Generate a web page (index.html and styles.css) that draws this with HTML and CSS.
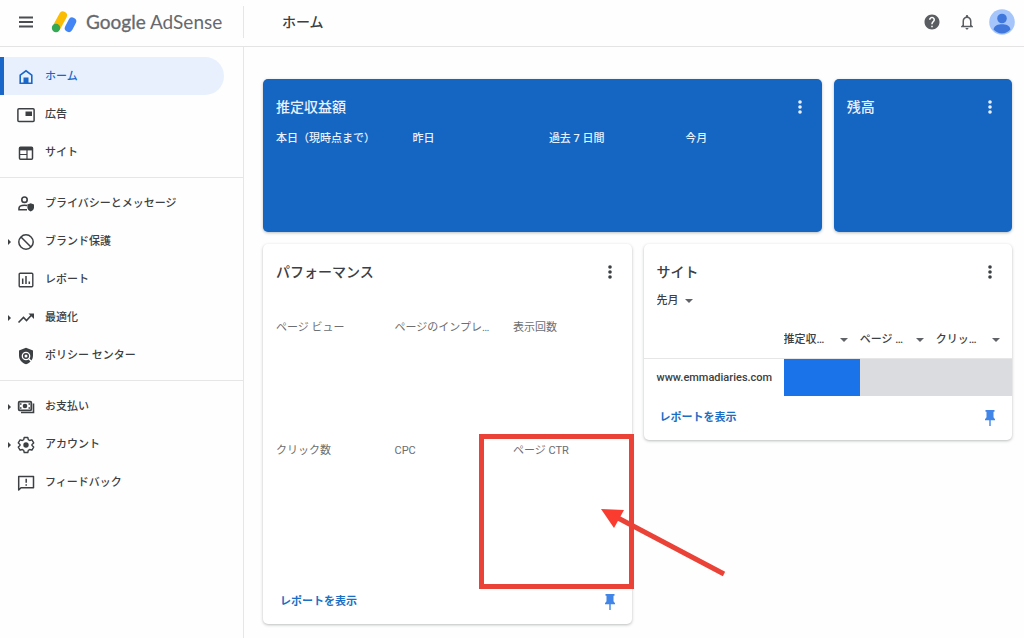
FILE: index.html
```html
<!DOCTYPE html>
<html lang="ja">
<head>
<meta charset="utf-8">
<meta name="viewport" content="width=device-width, initial-scale=1">
<title>ホーム - Google AdSense</title>
<link rel="stylesheet" href="styles.css">
</head>
<body>
<header class="topbar">
  <div class="brand">
    <button class="icon-button" aria-label="メニュー">
      <svg width="16" height="16" viewBox="0 0 16 16"><path d="M1 3.500h14M1 8h14M1 12.500h14" stroke="#4a4d51" stroke-width="1.800"/></svg>
    </button>
    <a class="logo" href="#">
      <svg width="28" height="26" viewBox="0 0 28 26">
        <path d="M7 17.500 13 6.500" stroke="#fbbc04" stroke-width="8" stroke-linecap="round"/>
        <circle cx="6" cy="19" r="4.200" fill="#34a853"/>
        <path d="M18.800 19 22.200 12.500" stroke="#4285f4" stroke-width="8" stroke-linecap="round"/>
      </svg>
      <span class="logo-text"><span class="logo-google">Google</span> AdSense</span>
    </a>
  </div>
  <h1 class="page-title">ホーム</h1>
  <div class="top-actions">
    <button class="icon-button" aria-label="ヘルプ">
      <svg width="18" height="18" viewBox="0 0 24 24" fill="#5a5d61"><path d="M12 2C6.480 2 2 6.480 2 12s4.480 10 10 10 10-4.480 10-10S17.520 2 12 2zm1 17h-2v-2h2v2zm2.070-7.750-.9.920C13.450 12.900 13 13.500 13 15h-2v-.5c0-1.100.450-2.100 1.170-2.830l1.240-1.260c.370-.360.590-.860.590-1.410 0-1.100-.9-2-2-2s-2 .9-2 2H8c0-2.210 1.790-4 4-4s4 1.790 4 4c0 .880-.360 1.680-.930 2.250z"/></svg>
    </button>
    <button class="icon-button" aria-label="通知">
      <svg width="18" height="18" viewBox="0 0 24 24" fill="#5a5d61"><path d="M12 22c1.100 0 2-.9 2-2h-4c0 1.100.9 2 2 2zm6-6v-5c0-3.070-1.630-5.640-4.500-6.320V4c0-.830-.670-1.500-1.500-1.500s-1.500.670-1.500 1.500v.680C7.640 5.360 6 7.920 6 11v5l-2 2v1h16v-1l-2-2zm-2 1H8v-6c0-2.480 1.510-4.500 4-4.500s4 2.020 4 4.500v6z"/></svg>
    </button>
    <button class="icon-button" aria-label="アカウント メニュー">
      <svg width="26" height="26" viewBox="0 0 26 26"><circle cx="13" cy="13" r="12.800" fill="#a6c6fb"/><circle cx="13" cy="9.500" r="4.800" fill="#3f77dd"/><path d="M4.500 20.500c1-4.200 4.500-5.200 8.500-5.200s7.500 1 8.500 5.200c-2 2.400-5 3.900-8.500 3.900s-6.500-1.500-8.500-3.900z" fill="#3f77dd"/></svg>
    </button>
  </div>
</header>

<div class="layout">
  <nav class="sidebar" aria-label="メイン">
    <ul class="nav-group">
      <li><a class="nav-item is-active" href="#" aria-current="page"><span class="caret"></span>
        <svg class="nav-icon" viewBox="0 0 18 18"><path d="M3.200 15.200V7.200L9 2.800l5.800 4.400v8z" fill="none" stroke="currentColor" stroke-width="1.600"/><path d="M6.500 9.500h5V15h-5z" fill="currentColor"/></svg>
        ホーム</a></li>
      <li><a class="nav-item" href="#"><span class="caret"></span>
        <svg class="nav-icon" viewBox="0 0 18 18"><rect x=".9" y="2.700" width="16.200" height="12.800" rx="1" fill="none" stroke="currentColor" stroke-width="1.500"/><path d="M8.500 5.500H15V10H8.500z" fill="currentColor"/></svg>
        広告</a></li>
      <li><a class="nav-item" href="#"><span class="caret"></span>
        <svg class="nav-icon" viewBox="0 0 18 18"><rect x="2.500" y="3.200" width="13" height="12" rx="1" fill="none" stroke="currentColor" stroke-width="1.500"/><path d="M2.500 3.200h13v3.200h-13z" fill="currentColor"/><path d="M2.500 10.500H10M10 6v9" stroke="currentColor" stroke-width="1.200"/></svg>
        サイト</a></li>
    </ul>
    <ul class="nav-group">
      <li><a class="nav-item" href="#"><span class="caret"></span>
        <svg class="nav-icon" viewBox="0 0 18 18"><circle cx="7.500" cy="4.700" r="2.700" fill="none" stroke="currentColor" stroke-width="1.600"/><path d="M10 14.700H2v-1.500c0-2 2.500-3 5.500-3 1 0 2 .1 2.700.4" fill="none" stroke="currentColor" stroke-width="1.600"/><path d="M13.700 8.200 17 9.500v2.800c0 2-1.400 3.600-3.300 4.200-1.900-.6-3.300-2.200-3.300-4.200V9.500z" fill="currentColor"/></svg>
        プライバシーとメッセージ</a></li>
      <li><a class="nav-item" href="#"><span class="caret has-children"></span>
        <svg class="nav-icon" viewBox="0 0 18 18"><circle cx="9" cy="9" r="7.200" fill="none" stroke="currentColor" stroke-width="1.500"/><path d="m4 4 10 10" stroke="currentColor" stroke-width="1.500"/></svg>
        ブランド保護</a></li>
      <li><a class="nav-item" href="#"><span class="caret"></span>
        <svg class="nav-icon" viewBox="0 0 18 18"><rect x="2.200" y="2.200" width="13.600" height="13.600" rx="1" fill="none" stroke="currentColor" stroke-width="1.400"/><path d="M5.700 7.500V13M9 5v8M12.300 10.500V13" stroke="currentColor" stroke-width="1.500"/></svg>
        レポート</a></li>
      <li><a class="nav-item" href="#"><span class="caret has-children"></span>
        <svg class="nav-icon" viewBox="0 0 18 18"><path d="m1.500 13.500 5-5 3 3 5.500-6" fill="none" stroke="currentColor" stroke-width="1.600"/><path d="M11.500 4.500H17V10z" fill="currentColor"/></svg>
        最適化</a></li>
      <li><a class="nav-item" href="#"><span class="caret"></span>
        <svg class="nav-icon" viewBox="0 0 18 18"><path d="M9 .8 16 3.500v5c0 4-2.900 7.500-7 8.700-4.100-1.200-7-4.700-7-8.700v-5z" fill="currentColor"/><circle cx="9" cy="9" r="3.700" fill="none" stroke="#fff" stroke-width="1.300"/><circle cx="9" cy="9" r="1.500" fill="#fff"/><path d="m11.500 11.500 3 3" stroke="#fff" stroke-width="1.300"/></svg>
        ポリシー センター</a></li>
    </ul>
    <ul class="nav-group">
      <li><a class="nav-item" href="#"><span class="caret has-children"></span>
        <svg class="nav-icon" viewBox="0 0 18 18"><rect x="1.700" y="3.700" width="12.600" height="8.600" rx="1" fill="none" stroke="currentColor" stroke-width="1.800"/><circle cx="8" cy="8" r="2.300" fill="currentColor"/><path d="M3 6h1.500M11.500 6H13M3 10h1.500M11.500 10H13" stroke="currentColor" stroke-width="1.400"/><path d="M16.500 5.500v9H4" fill="none" stroke="currentColor" stroke-width="1.600"/></svg>
        お支払い</a></li>
      <li><a class="nav-item" href="#"><span class="caret has-children"></span>
        <svg class="nav-icon" viewBox="0 0 18 18"><path d="M7.200 1.500h3.600l.5 2.200 1.400.8 2.200-.7 1.800 3.100-1.700 1.500v1.200l1.700 1.500-1.800 3.100-2.200-.7-1.400.8-.5 2.200H7.200l-.5-2.200-1.400-.8-2.200.7-1.800-3.100L3 9.600V8.400L1.300 6.900l1.800-3.100 2.200.7 1.400-.8z" fill="none" stroke="currentColor" stroke-width="1.400" stroke-linejoin="round"/><circle cx="9" cy="9" r="2.700" fill="currentColor"/></svg>
        アカウント</a></li>
      <li><a class="nav-item" href="#"><span class="caret"></span>
        <svg class="nav-icon" viewBox="0 0 18 18"><path d="M1.700 16V2.500h14.800v11.200H4z" fill="none" stroke="currentColor" stroke-width="1.500" stroke-linejoin="round"/><path d="M9.200 4.800v4M9.200 10.200v1.600" stroke="currentColor" stroke-width="1.500"/></svg>
        フィードバック</a></li>
    </ul>
  </nav>

  <main class="dashboard">
    <section class="card card-blue earnings">
      <div class="card-head"><h2 class="card-title">推定収益額</h2>
        <button class="more" aria-label="推定収益額のその他の操作"><svg width="6" height="16" viewBox="0 0 6 16" fill="currentColor"><circle cx="3" cy="3" r="1.800"/><circle cx="3" cy="8" r="1.800"/><circle cx="3" cy="13" r="1.800"/></svg></button>
      </div>
      <ul class="periods"><li>本日（現時点まで）</li><li>昨日</li><li>過去 7 日間</li><li>今月</li></ul>
    </section>

    <section class="card card-blue">
      <div class="card-head"><h2 class="card-title">残高</h2>
        <button class="more" aria-label="残高のその他の操作"><svg width="6" height="16" viewBox="0 0 6 16" fill="currentColor"><circle cx="3" cy="3" r="1.800"/><circle cx="3" cy="8" r="1.800"/><circle cx="3" cy="13" r="1.800"/></svg></button>
      </div>
    </section>

    <section class="card half">
      <div class="card-head"><h2 class="card-title">パフォーマンス</h2>
        <button class="more" aria-label="パフォーマンスのその他の操作"><svg width="6" height="16" viewBox="0 0 6 16" fill="currentColor"><circle cx="3" cy="3" r="1.800"/><circle cx="3" cy="8" r="1.800"/><circle cx="3" cy="13" r="1.800"/></svg></button>
      </div>
      <ul class="metrics">
        <li>ページ ビュー</li><li>ページのインプレ…</li><li>表示回数</li>
        <li>クリック数</li><li>CPC</li>
        <li class="metric-marked">ページ CTR
          <span class="highlight"><svg class="pointer" width="250" height="150" viewBox="0 0 250 150"><path d="m134 79 106 56" stroke="#ea4237" stroke-width="5"/><path d="m117 70 23 1-10 18z" fill="#fa3c30"/></svg></span>
        </li>
      </ul>
      <div class="card-foot">
        <a class="report-link" href="#">レポートを表示</a>
        <button class="pin" aria-label="固定"><svg width="10" height="16" viewBox="0 0 10 16" fill="currentColor"><path d="M.5 0h9v1.800h-1v5.400l1.500 2v1H5.700V16H4.300v-5.800H0v-1l1.500-2V1.800h-1z"/></svg></button>
      </div>
    </section>

    <section class="card half sites">
      <div class="card-head"><h2 class="card-title">サイト</h2>
        <button class="more" aria-label="サイトのその他の操作"><svg width="6" height="16" viewBox="0 0 6 16" fill="currentColor"><circle cx="3" cy="3" r="1.800"/><circle cx="3" cy="8" r="1.800"/><circle cx="3" cy="13" r="1.800"/></svg></button>
      </div>
      <div class="picker period-picker"><select aria-label="期間"><option>先月</option></select><span class="arrow"></span></div>
      <table class="site-table">
        <thead><tr>
          <td class="site-col"></td>
          <th scope="col"><div class="picker"><select aria-label="指標 1"><option>推定収…</option></select><span class="arrow"></span></div></th>
          <th scope="col"><div class="picker"><select aria-label="指標 2"><option>ページ …</option></select><span class="arrow"></span></div></th>
          <th scope="col"><div class="picker"><select aria-label="指標 3"><option>クリッ…</option></select><span class="arrow"></span></div></th>
        </tr></thead>
        <tbody><tr>
          <th class="site-name" scope="row">www.emmadiaries.com</th>
          <td class="value-main"></td><td class="value-muted"></td><td class="value-muted"></td>
        </tr></tbody>
      </table>
      <div class="card-foot">
        <a class="report-link" href="#">レポートを表示</a>
        <button class="pin" aria-label="固定"><svg width="10" height="16" viewBox="0 0 10 16" fill="currentColor"><path d="M.5 0h9v1.800h-1v5.400l1.500 2v1H5.700V16H4.300v-5.800H0v-1l1.500-2V1.800h-1z"/></svg></button>
      </div>
    </section>
  </main>
</div>
</body>
</html>
```

FILE: styles.css
```css
* { box-sizing: border-box; }

body {
  margin: 0;
  min-height: 100vh;
  display: flex;
  flex-direction: column;
  background: #fefefe;
  color: #3c4043;
  font: 500 11px/16px Roboto, "Noto Sans CJK JP", sans-serif;
}

ul { margin: 0; padding: 0; list-style: none; }
a { color: inherit; text-decoration: none; }
svg { display: block; }

button, select {
  margin: 0;
  padding: 0;
  border: 0;
  background: none;
  color: inherit;
  font: inherit;
  appearance: none;
  cursor: pointer;
}

/* Top bar */
.topbar {
  display: flex;
  align-items: center;
  height: 47px;
  padding: 0 9px 2px 0;
  border-bottom: 1px solid #e4e4e4;
}

.brand {
  display: flex;
  align-items: center;
  gap: 16px;
  width: 244px;
  height: 32px;
  padding-left: 18px;
  border-right: 1px solid #e6e6e6;
}

.logo { display: flex; align-items: center; gap: 8px; }

.logo-text {
  color: #66696d;
  font: 400 19px/24px Lato, sans-serif;
  white-space: nowrap;
}

.logo-google { -webkit-text-stroke: 0.3px currentColor; }

.page-title {
  flex: 1;
  margin: 0 0 0 38px;
  font-size: 14px;
  font-weight: 500;
  line-height: 20px;
}

.top-actions { display: flex; align-items: center; gap: 17px; }
.top-actions .icon-button:last-child { margin-left: -4px; }

/* Navigation */
.layout { display: flex; flex: 1; }

.sidebar {
  flex: none;
  width: 244px;
  padding-top: 10px;
  border-right: 1px solid #e6e6e6;
}

.nav-group + .nav-group {
  margin-top: 6px;
  padding-top: 6px;
  border-top: 1px solid #e6e6e6;
}

.nav-item {
  display: flex;
  align-items: center;
  height: 38px;
  margin-right: 19px;
  padding: 2px 0 0 8px;
}

.nav-icon { width: 18px; height: 18px; margin-right: 10px; }

.is-active {
  padding-left: 4px;
  border-left: 4px solid #1967c8;
  border-radius: 0 19px 19px 0;
  background: #e8f0fe;
  color: #1967c8;
}

.caret { width: 9px; }

.has-children::before {
  content: "";
  display: block;
  width: 0;
  border: 3px solid transparent;
  border-right: 0;
  border-left-color: #3c4043;
}

/* Cards */
.dashboard {
  flex: 1;
  display: grid;
  grid-template-columns: repeat(4, minmax(0, 1fr));
  gap: 12px;
  align-items: start;
  align-content: start;
  padding: 32px 12px 12px 19px;
}

.card {
  padding: 18px 12px 14px 13px;
  border-radius: 5px;
  background: #fff;
  box-shadow: 0 1px 3px rgba(60, 64, 67, 0.35);
}

.card-blue { min-height: 153px; background: #1565c2; color: #e8f1fd; }
.earnings { grid-column: span 3; }
.half { grid-column: span 2; }

.card-head, .card-foot {
  display: flex;
  align-items: center;
  justify-content: space-between;
}

.card-title { margin: 0; font-size: 14px; font-weight: 500; line-height: 20px; }
.more { padding: 0 7px; }

.periods {
  display: grid;
  grid-template-columns: repeat(4, 1fr);
  gap: 12px;
  margin-top: 14px;
}

.metrics {
  display: grid;
  grid-template-columns: repeat(3, minmax(0, 1fr));
  grid-auto-rows: 123px;
  column-gap: 12px;
  margin-top: 38px;
  color: #6b6e72;
  font-weight: 400;
  white-space: nowrap;
}

.metric-marked { position: relative; }

.highlight {
  position: absolute;
  top: -9px;
  left: -34px;
  right: -14px;
  height: 155px;
  border: 5px solid #ea4237;
}

.pointer { position: absolute; top: 0; left: 0; }

.card-foot { padding: 0 4px; }
.metrics + .card-foot { margin-top: 28px; }
.report-link { color: #1a6fc4; font-weight: 700; }
.pin { padding: 0 1px; color: #4285e8; }

/* Sites table */
.picker { display: flex; align-items: center; }

.arrow {
  border: 4px solid transparent;
  border-top-color: #5f6368;
  border-bottom: 0;
}

.period-picker { gap: 6px; margin-top: 11px; }

.sites { padding-left: 0; padding-right: 0; }
.sites .card-head, .sites .period-picker { padding-left: 13px; padding-right: 12px; }
.sites .card-foot { margin-top: 14px; padding: 0 16px; }

.site-table {
  width: 100%;
  margin-top: 12px;
  border-collapse: collapse;
  table-layout: fixed;
}

.site-table thead { height: 37px; border-bottom: 1px solid #e6e6e6; }
.site-table td, .site-table th { padding: 0; font-weight: 500; text-align: left; }
.site-table .picker { justify-content: space-between; padding: 2px 12px 0 0; }
.site-col { width: 38%; }
.site-table tbody { height: 38px; }
.site-table .site-name { padding: 2px 0 0 13px; }
.value-main { background: #1a73e8; }
.value-muted { background: #dadcdf; }
```
